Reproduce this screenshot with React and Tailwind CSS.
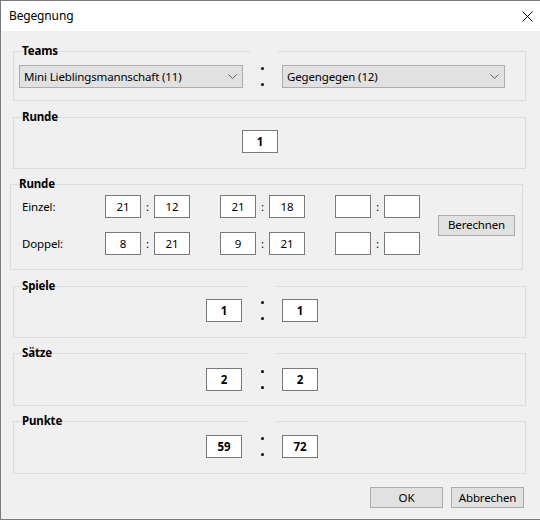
import React from "react";

function Chevron() {
  return (
    <svg width="9" height="5" viewBox="0 0 9 5" className="block">
      <polyline points="0.5,0.5 4.5,4.5 8.5,0.5" fill="none" stroke="#5f5f5f" strokeWidth="1" />
    </svg>
  );
}

function Combo({ text, w }) {
  return (
    <div className={`h-[23px] ${w} bg-[#e1e1e1] border border-[#adadad] flex items-center justify-between pl-[4px] pr-[5px]`}>
      <span className="leading-[14px]">{text}</span>
      <Chevron />
    </div>
  );
}

function Colon({ w, cover }) {
  return (
    <div className={`relative h-[23px] ${w} flex flex-col items-center justify-between py-[2px]`}>
      <div className={`absolute left-[7px] w-[28px] h-[3px] bg-[#f0f0f0] ${cover}`} />
      <div className="w-[3px] h-[3px] rounded-full bg-black" />
      <div className="w-[3px] h-[3px] rounded-full bg-black" />
    </div>
  );
}

function ResultBox({ v }) {
  return (
    <div className="w-[36px] h-[23px] bg-white border border-[#7a7a7a] flex items-center justify-center font-bold leading-[14px]">
      {v}
    </div>
  );
}

function ScoreBox({ v }) {
  return (
    <div className="w-[36px] h-[23px] bg-white border border-[#7a7a7a] flex items-center justify-center leading-[14px]">
      {v}
    </div>
  );
}

function Pair({ a, b }) {
  return (
    <div className="flex items-center">
      <ScoreBox v={a} />
      <div className="w-[13px] h-[23px] flex items-center justify-center leading-[14px]">:</div>
      <ScoreBox v={b} />
    </div>
  );
}

function Legend({ children }) {
  return <legend className="ml-[8px] p-0 font-bold leading-[14px]">{children}</legend>;
}

function ResultGroup({ title, a, b, mt, pt, pb, cover }) {
  return (
    <fieldset className={`ml-[12px] w-[513px] border border-[#dcdcdc] ${mt}`}>
      <Legend>{title}</Legend>
      <div className={`flex items-center pl-[192px] ${pt} ${pb}`}>
        <ResultBox v={a} />
        <Colon w="w-[40px]" cover={cover} />
        <ResultBox v={b} />
      </div>
    </fieldset>
  );
}

function Button({ children, w }) {
  return (
    <div className={`h-[21px] ${w} bg-[#e1e1e1] border border-[#adadad] flex items-center justify-center leading-[14px]`}>
      {children}
    </div>
  );
}

export default function App() {
  return (
    <div className="w-[540px] h-[520px] bg-[#f0f0f0] border-l border-t border-b border-[#7a7a7a] font-['Noto_Sans',sans-serif] text-[11.5px] tracking-[-0.15px] text-black flex flex-col overflow-hidden">
      <div className="h-[30px] bg-white flex items-center justify-between pl-[8px] pr-[8px] shrink-0">
        <span className="leading-[14px] text-[12px]">Begegnung</span>
        <svg width="11" height="11" viewBox="0 0 11 11" className="block mr-[-1px]">
          <line x1="0.5" y1="0.5" x2="10.5" y2="10.5" stroke="#000" strokeWidth="1" />
          <line x1="10.5" y1="0.5" x2="0.5" y2="10.5" stroke="#000" strokeWidth="1" />
        </svg>
      </div>

      <div className="flex flex-col">
        <fieldset className="ml-[12px] w-[513px] border border-[#dcdcdc] mt-[13px]">
          <Legend>Teams</Legend>
          <div className="flex items-center pl-[5px] pt-[7px] pb-[12px]">
            <Combo text="Mini Lieblingsmannschaft (11)" w="w-[224px]" />
            <Colon w="w-[39px]" cover="top-[-15px]" />
            <Combo text="Gegengegen (12)" w="w-[223px]" />
          </div>
        </fieldset>

        <fieldset className="ml-[12px] w-[513px] border border-[#dcdcdc] mt-[9px]">
          <Legend>Runde</Legend>
          <div className="flex items-center pl-[228px] pt-[6px] pb-[15px]">
            <ResultBox v="1" />
          </div>
        </fieldset>

        <fieldset className="ml-[9px] w-[513px] border border-[#dcdcdc] mt-[8px]">
          <Legend>Runde</Legend>
          <div className="flex items-center pl-[11px] pt-[4px] pb-[14px]">
            <div className="flex flex-col gap-[14px]">
              <div className="flex items-center">
                <span className="w-[83px] leading-[14px]">Einzel:</span>
                <Pair a="21" b="12" />
                <div className="w-[30px]" />
                <Pair a="21" b="18" />
                <div className="w-[30px]" />
                <Pair a="" b="" />
              </div>
              <div className="flex items-center">
                <span className="w-[83px] leading-[14px]">Doppel:</span>
                <Pair a="8" b="21" />
                <div className="w-[30px]" />
                <Pair a="9" b="21" />
                <div className="w-[30px]" />
                <Pair a="" b="" />
              </div>
            </div>
            <div className="ml-[18px]">
              <Button w="w-[77px]">Berechnen</Button>
            </div>
          </div>
        </fieldset>

        <ResultGroup title="Spiele" a="1" b="1" mt="mt-[9px]" pt="pt-[6px]" pb="pb-[15px]" cover="top-[-14px]" />
        <ResultGroup title="Sätze" a="2" b="2" mt="mt-[8px]" pt="pt-[8px]" pb="pb-[14px]" cover="top-[-16px]" />
        <ResultGroup title="Punkte" a="59" b="72" mt="mt-[8px]" pt="pt-[7px]" pb="pb-[15px]" cover="top-[-15px]" />

        <div className="flex justify-end gap-[8px] pr-[16px] mt-[13px]">
          <Button w="w-[73px]">OK</Button>
          <Button w="w-[73px]">Abbrechen</Button>
        </div>
      </div>
    </div>
  );
}
